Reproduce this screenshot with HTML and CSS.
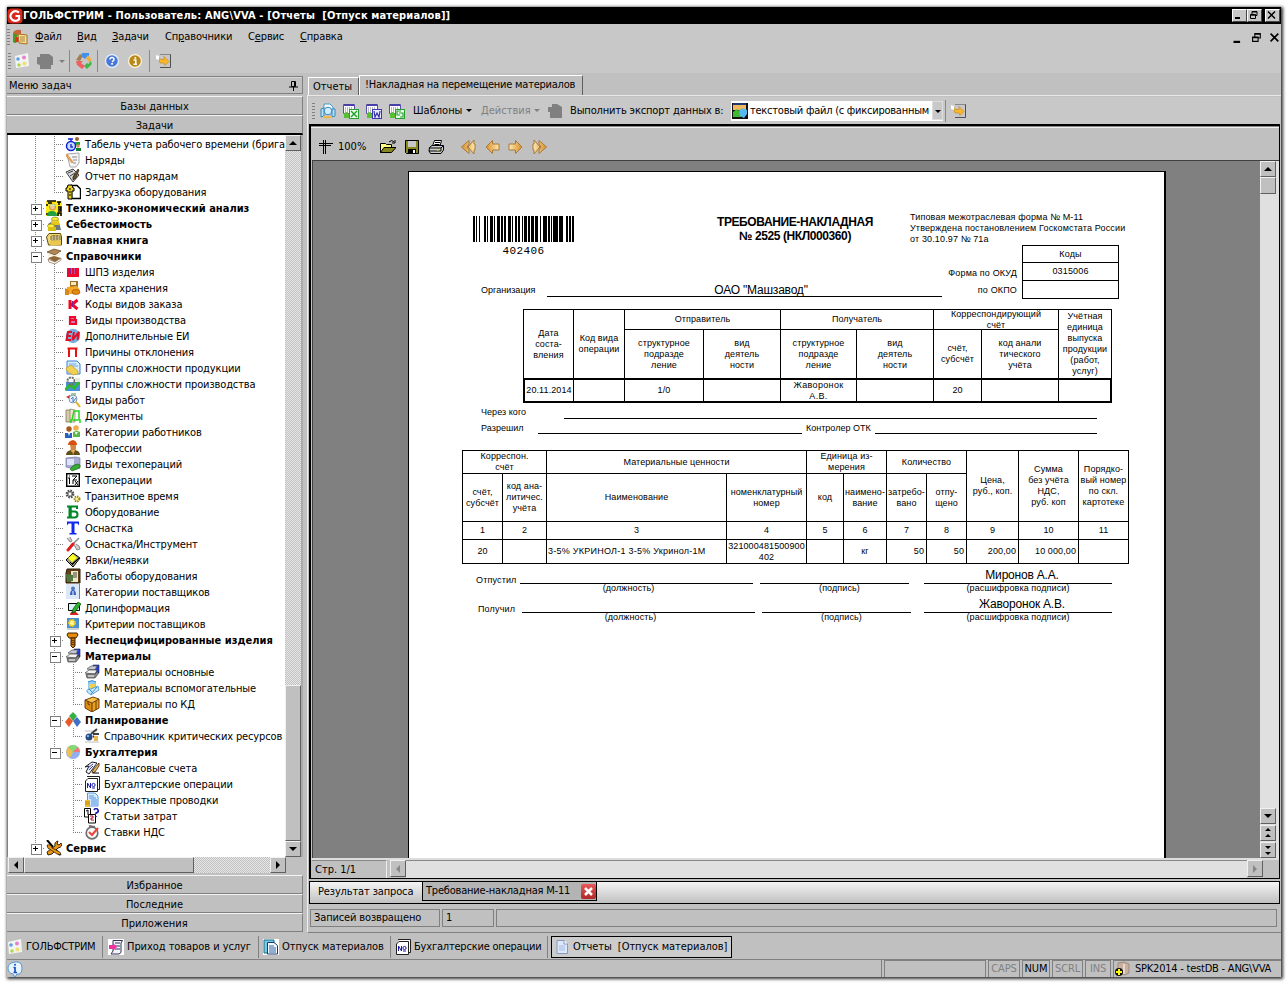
FILE: index.html
```html
<!DOCTYPE html>
<html lang="ru">
<head>
<meta charset="utf-8">
<title>ГОЛЬФСТРИМ</title>
<link rel="stylesheet" href="styles.css">
</head>
<body>
<svg class="defs" xmlns="http://www.w3.org/2000/svg">
<symbol id="logo" viewBox="0 0 16 16"><rect x=".5" y=".5" width="15" height="15" rx="4" fill="#d8281c"/><path d="M12 4.500Q8 1.500 4.800 5T5.500 12Q9 14 12 11.500V8H8.500" fill="none" stroke="#fff" stroke-width="2.200"/></symbol>
<symbol id="report" viewBox="0 0 16 16"><path d="M1 4Q3 0 9 1V7H1z" fill="#c86438"/><path d="M1 6q2-3 4 0v7q-2 2-4 0z" fill="#4a9a20"/><path d="M4 8h3v5H3z" fill="#e03020"/><path d="M6 5l9 1v9l-8-1z" fill="#f2e2a0" stroke="#a87020"/><path d="M8 8h5M8 10h5M8 12h5" stroke="#b08030"/></symbol>
<symbol id="dots" viewBox="0 0 16 16"><path d="M1 3L14 0 15 13 2 15z" fill="#f2f4f2"/><circle cx="4" cy="6" r="1.800" fill="#60a0e8"/><circle cx="10" cy="4.500" r="2" fill="#e880d0"/><circle cx="5" cy="12" r="1.800" fill="#b0d850"/><circle cx="10.500" cy="10.500" r="2" fill="#f0e070"/></symbol>
<symbol id="blob" viewBox="0 0 16 16"><path d="M3 1H12L16 4V12H14V16H3V12L0 11V4H3z" fill="#808080"/></symbol>
<symbol id="puzzle" viewBox="0 0 16 16"><path d="M1 4h4V1h5l5 3v11H3V9H1z" fill="#808080"/></symbol>
<symbol id="cycle" viewBox="0 0 16 16"><path d="M0 7L4 1 7 3 4 8z" fill="#a08050"/><path d="M6 0h7v6l-2-2-2 2-4-3z" fill="#4090f0"/><path d="M14 7l2 4-5 5-3-3 3-3 2 1z" fill="#40b848"/><path d="M0 8h7L5 10l4 3-3 3-5-4z" fill="#f06060"/><path d="M12 2l4 5-3 2-3-4z" fill="#f0b040"/></symbol>
<symbol id="help" viewBox="0 0 16 16"><circle cx="8" cy="8" r="7" fill="#e8f0ff"/><circle cx="8" cy="8" r="5.800" fill="#4878d8"/><path d="M6 6.500Q6 4.500 8 4.500T10 6.500Q10 7.500 8 8.800" fill="none" stroke="#fff" stroke-width="1.500"/><rect x="7.200" y="10" width="1.700" height="1.700" fill="#fff"/></symbol>
<symbol id="about" viewBox="0 0 16 16"><circle cx="8" cy="8" r="7" fill="#fff4d8"/><circle cx="8" cy="8" r="5.800" fill="#b88818"/><path d="M6.500 7H8.800V11M6.500 11.300H10" fill="none" stroke="#fff" stroke-width="1.500"/><rect x="7.500" y="4" width="1.700" height="1.700" fill="#fff"/></symbol>
<symbol id="exit" viewBox="0 0 16 16"><path d="M4 1.500H14.500V14.500H4" fill="none" stroke="#505050"/><path d="M4 1.500H14" stroke="#888"/><path d="M2 4l3 2.500h3V3.500L13 8.500 9 12.500 8 10H4z" fill="#f8b828" stroke="#c08020" stroke-width=".6"/><path d="M0 2l3 1v4L0 6z" fill="#fff"/></symbol>
<symbol id="preview" viewBox="0 0 16 16"><path d="M4 1h6l3 3v5H4z" fill="#f8fcff" stroke="#4898c8"/><path d="M1 6l3-1v8l-3 1zM12 6l3 0v7l-3 1z" fill="#b8e0f8" stroke="#3888b8"/><circle cx="8" cy="8" r="3.800" fill="#d0ecff" stroke="#3888b8"/><path d="M3 14q4 3 9 0v-1H3z" fill="#f0b848"/></symbol>
<symbol id="sheet" viewBox="0 0 16 16"><path d="M.5 1.500H11.500V10.500H.5z" fill="#fff" stroke="#5850a8"/><path d="M1 2h10" stroke="#4840a8" stroke-width="2"/><path d="M2 5h8M2 7h8M2 9h8" stroke="#707088" stroke-dasharray="1 1"/><path d="M1 12q0-3 3-3l2 2v4H1z" fill="#58c030"/></symbol>
<symbol id="xls" viewBox="0 0 16 16"><use href="#sheet"/><rect x="6.500" y="6.500" width="9" height="9" fill="#e8ffe8" stroke="#28a030"/><path d="M8 8l6 6M14 8l-6 6" stroke="#28a030" stroke-width="1.500"/></symbol>
<symbol id="doc" viewBox="0 0 16 16"><use href="#sheet"/><rect x="6.500" y="6.500" width="9" height="9" fill="#e8e8ff" stroke="#3838b0"/><path d="M8 8l1 6 2-4 2 4 1-6" fill="none" stroke="#3030a8" stroke-width="1.200"/></symbol>
<symbol id="csv" viewBox="0 0 16 16"><use href="#sheet"/><rect x="6.500" y="6.500" width="9" height="9" fill="#e8ffe8" stroke="#28a030"/><path d="M12 8H8v4h3M10 10h4v4h-3" fill="none" stroke="#28a030" stroke-width="1.200"/></symbol>
<symbol id="picture" viewBox="0 0 16 16"><path d="M0 0h16v16H0z" fill="#101010"/><path d="M1 1h13v6H1z" fill="#f0b860"/><path d="M1 0h13v2H1z" fill="#203878"/><path d="M1 9l4-3 4 4v4H1z" fill="#40b830"/><path d="M7 7q4-3 8 0v4l-3 4-4-2z" fill="#58b8f0"/></symbol>
<symbol id="cross" viewBox="0 0 16 16"><path d="M1 4.500H15M1 6.500H13M5.500 1V15M7.500 1V15" stroke="#000"/></symbol>
<symbol id="open" viewBox="0 0 16 16"><path d="M.5 13.500V4.500h5l1 1h5v3" fill="#ffff80" stroke="#000"/><path d="M.5 13.500L4 8.500H16L11.500 13.500z" fill="#888820" stroke="#000"/><path d="M9 3q3-3 5 0m1-2v3h-3" fill="none" stroke="#000"/></symbol>
<symbol id="save" viewBox="0 0 16 16"><path d="M1.500 1.500H14.500V14.500H2.500L1.500 13.500z" fill="#888820" stroke="#000"/><path d="M4 2h8v6H4z" fill="#c8c8c8"/><path d="M4 10h8v5H4z" fill="#000"/><path d="M9 11h2v3H9z" fill="#fff"/></symbol>
<symbol id="print" viewBox="0 0 16 16"><path d="M4.500 7L6.500 1.500H13.500L12 7" fill="#fff" stroke="#000"/><path d="M7 3.500h5M6.500 5.500h5" stroke="#000"/><path d="M1.500 8.500L4 6.500H15.500V11L13 14.500H2.500L1 12z" fill="#d0d0d0" stroke="#000"/><path d="M1 9h12v3H1M13 9l2-2" fill="none" stroke="#000"/><path d="M9 11h2" stroke="#dd0"/></symbol>
<linearGradient id="gold"><stop offset="0" stop-color="#ffe8b0"/><stop offset="1" stop-color="#d89028"/></linearGradient>
<symbol id="next" viewBox="0 0 16 16"><path d="M1 5H7.500V1.500L14 8 7.500 14.500V11H1z" fill="url(#gold)" stroke="#a87838"/></symbol>
<symbol id="prev" viewBox="0 0 16 16"><g transform="matrix(-1 0 0 1 16 0)"><use href="#next"/></g></symbol>
<symbol id="last" viewBox="0 0 16 16"><path d="M1 5H2V1L8 8 2 15V11H1zM7 1.500L14.500 8 7 14.500V11l2-3-2-3z" fill="url(#gold)" stroke="#a87838"/></symbol>
<symbol id="first" viewBox="0 0 16 16"><g transform="matrix(-1 0 0 1 16 0)"><use href="#last"/></g></symbol>
<symbol id="timer" viewBox="0 0 16 16"><circle cx="12" cy="3" r="2" fill="#a06030"/><path d="M10 6h5v3h-5z" fill="#20a040"/><circle cx="13" cy="10" r="1.800" fill="#d89050"/><path d="M11 12h5v3h-5z" fill="#108030"/><circle cx="6" cy="10" r="4.500" fill="#c8e0ff" stroke="#1020d0" stroke-width="1.500"/><path d="M6 3v3M3 3h5M6 8v3h2" fill="none" stroke="#1020d0" stroke-width="1.300"/></symbol>
<symbol id="note" viewBox="0 0 16 16"><path d="M2 2l12-1v10l-3 4H5z" fill="#f4f4f4" stroke="#a8a8a8"/><path d="M7 5h5M8 8h4M8 11h3" stroke="#888"/><path d="M2 2l6 8-1 1-6-7z" fill="#f0a848" stroke="#b87030" stroke-width=".5"/></symbol>
<symbol id="clip" viewBox="0 0 16 16"><path d="M1 4l7-3 6 6-6 7z" fill="#d8dce0" stroke="#404040"/><path d="M3 5l5-2M5 8l5-3M8 10l2-4" stroke="#404040"/><path d="M13 1L8 9v3l3-2 3-8z" fill="#705030" stroke="#201000" stroke-width=".6"/></symbol>
<symbol id="load" viewBox="0 0 16 16"><path d="M6.500 1.500H12L15.500 5V14.500H6.500z" fill="#fff" stroke="#000" stroke-width="1.400"/><path d="M3 1h4l1 3h1v3H7v8H3V7H1V4h1z" fill="#e8d020" stroke="#000"/><path d="M4 5h2M4 8h2M4 11h2" stroke="#000"/></symbol>
<symbol id="tea" viewBox="0 0 16 16"><path d="M0 1h16v15H0z" fill="#ffe818"/><path d="M1 1h9M2 3h4M0 5h2M11 2h4M13 2v3M12 7h3v4h-3M12 9h3M12 16v-3h3v3M0 14h3" fill="none" stroke="#000" stroke-width="1.500"/><circle cx="6.500" cy="7" r="3" fill="#f0c898" stroke="#805020" stroke-width=".5"/><path d="M3 6q3-4 7 0z" fill="#c0e8b0"/><path d="M1 16q0-5 5-5t5 5z" fill="#20a040"/></symbol>
<symbol id="cost" viewBox="0 0 16 16"><path d="M2 8l3-2h8l2 8H2z" fill="#707880"/><ellipse cx="9" cy="3" rx="3.500" ry="2" fill="#f8e838" stroke="#807000" stroke-width=".6"/><path d="M5 4v5h8V4q-4 3-8 0z" fill="#e8c818"/><ellipse cx="5" cy="10" rx="3.500" ry="2" fill="#fff040" stroke="#807000" stroke-width=".6"/><path d="M2 11v4h8v-4z" fill="#d8c010"/></symbol>
<symbol id="ledger" viewBox="0 0 16 16"><path d="M.5 5L3 1.500h11.500L15.500 5V13H2.500z" fill="#f0d878" stroke="#604808"/><path d="M5 4h9v4H5z" fill="#fff8d0" stroke="#604808" stroke-width=".7"/><path d="M8 3v5M11 3v5M5 6h9" stroke="#604808" stroke-width=".7"/><path d="M3 9l12-1v5l-10 1z" fill="#e8c850"/></symbol>
<symbol id="books" viewBox="0 0 16 16"><path d="M1 4l7-3 7 2-6 4z" fill="#b08858" stroke="#604018" stroke-width=".7"/><path d="M1 5l8 3 5-4v3L9 10 2 8z" fill="#f8f0d8"/><path d="M2 10l6-2 7 2-6 4z" fill="#906838"/><path d="M2 11l7 3 6-4v2l-6 4-6-2z" fill="#fff" stroke="#705028" stroke-width=".6"/></symbol>
<symbol id="sh" viewBox="0 0 16 16"><path d="M2 4H5V10H6.500V4H9.500V10H11V4H14V13H2z" fill="#f00828"/><path d="M5.700 4v6M10.200 4v6" stroke="#8020a0" stroke-width="1.500"/></symbol>
<symbol id="dozer" viewBox="0 0 16 16"><path d="M5 1h8v7H5z" fill="#a07028"/><path d="M6 2h5v3H6z" fill="#f8e8c0"/><path d="M2 7l10-1 3 4-4 4H2z" fill="#f8a828"/><path d="M0 8l4 2v5H0z" fill="#d88818"/><ellipse cx="11" cy="12" rx="4" ry="2.500" fill="#e88810" stroke="#804800" stroke-width=".6"/></symbol>
<symbol id="k" viewBox="0 0 16 16"><path d="M5 4v9M12.500 4L7 8.500l5.500 4.500" fill="none" stroke="#f00828" stroke-width="3"/><path d="M7.500 5v6" stroke="#802090"/></symbol>
<symbol id="b" viewBox="0 0 16 16"><path d="M5 5H10V8H5zM5 8H11V12H5z" fill="#d080c0" stroke="#f00828" stroke-width="2.200"/></symbol>
<symbol id="ei" viewBox="0 0 16 16"><circle cx="8" cy="8" r="7.200" fill="#78b0e0"/><path d="M7 4H3L1.500 12H6M2 8h4M9 4L7.500 12L14 4L12.500 12" fill="none" stroke="#e01028" stroke-width="2"/></symbol>
<symbol id="p" viewBox="0 0 16 16"><path d="M4 13V4.500H11V13M2.500 4.500h10" fill="none" stroke="#e81010" stroke-width="2"/></symbol>
<symbol id="gprod" viewBox="0 0 16 16"><path d="M2 1h10l3 3v10H2z" fill="#d8ecff" stroke="#3880d0"/><path d="M4 4h7M4 6h9" stroke="#70a8e0"/><path d="M1 8l5-3 7 6v3l-5 1-6-4z" fill="#f0d050" stroke="#b89020" stroke-width=".6"/></symbol>
<symbol id="gmake" viewBox="0 0 16 16"><path d="M1 6h14v9H1z" fill="#4890e0"/><path d="M0 14l5-5 4 3 5-6" fill="none" stroke="#30b830" stroke-width="3"/><circle cx="6" cy="5" r="3.500" fill="none" stroke="#707070" stroke-width="2" stroke-dasharray="2 .8"/><path d="M10 2h5v4h-5z" fill="#e0e8e0"/></symbol>
<symbol id="works" viewBox="0 0 16 16"><path d="M1 5l4-2v4z" fill="#c03020"/><path d="M6 2h5M6 4h4" stroke="#40a030"/><circle cx="8" cy="7" r="4" fill="#e8f0f8" stroke="#8898a8"/><path d="M6 7l2-2v5l3-4" stroke="#3880d0" fill="none"/><path d="M11 10l4 5" stroke="#e0b020" stroke-width="2"/></symbol>
<symbol id="docs" viewBox="0 0 16 16"><path d="M1 2h5v12H1z" fill="#d8cca8" stroke="#706850" stroke-width=".7"/><path d="M5 1l5 1v12l-5 0z" fill="#eee4c8" stroke="#706850" stroke-width=".6"/><path d="M6 15v-3h1L9 3h5v9h1v3M8 12h5" fill="none" stroke="#20d820" stroke-width="1.500"/></symbol>
<symbol id="people" viewBox="0 0 16 16"><circle cx="4" cy="5" r="2.700" fill="#a85818"/><circle cx="11" cy="4" r="2.800" fill="#f0b050"/><path d="M0 14V9h7v5z" fill="#2860c0"/><path d="M8 13V8q4-2 7 0v5z" fill="#58b848"/><path d="M3 9l1 3 1-3M10 8l1 3 2-3" fill="#fff"/></symbol>
<symbol id="worker" viewBox="0 0 16 16"><path d="M1 15q0-4 5-5h4q5 1 5 5z" fill="#605018"/><path d="M5 4h6v5l-2 3H6z" fill="#d08840"/><path d="M3 5q0-4 5-5 4 1 4 5z" fill="#d85010"/><path d="M7 10l1 5 2-5" fill="#e8b060"/></symbol>
<symbol id="ops" viewBox="0 0 16 16"><path d="M1 2l10-1 4 1v9l-5 2-9-2z" fill="#a8acd0" stroke="#606898" stroke-width=".6"/><path d="M2 3h7v6H2z" fill="#e0e4f8"/><path d="M5 13q3-5 8-5l2 1v3l-8 3z" fill="#38a838" stroke="#186018" stroke-width=".6"/></symbol>
<symbol id="techop" viewBox="0 0 16 16"><path d="M1.700 1.700H14.300V14.300H1.700z" fill="#fff" stroke="#000" stroke-width="1.400"/><path d="M3 6h2M4.500 6v6M4 4h1M7 4h5L8 8h4M8 8v4M10 9l3 4M13 9l-3 4" fill="none" stroke="#000"/></symbol>
<symbol id="gears" viewBox="0 0 16 16"><circle cx="5" cy="6" r="3.200" fill="#a0a0a0" stroke="#505050" stroke-width="2.400" stroke-dasharray="1.500 1"/><circle cx="12" cy="11" r="2.500" fill="#f8e888" stroke="#908020" stroke-width="2" stroke-dasharray="1.300 1"/><circle cx="5" cy="6" r="1.200" fill="#fff"/></symbol>
<symbol id="eq" viewBox="0 0 16 16"><path d="M12 5V2.500H2M5.500 2.500v11M6 7.500h3.500q3 0 3 3t-3 3H2" fill="none" stroke="#008828" stroke-width="2"/><path d="M5 2.500v11" stroke="#008828" stroke-width="3"/></symbol>
<symbol id="t" viewBox="0 0 16 16"><path d="M6.500 2h3v11h2v1.500h-7V13h2z" fill="#1028f0"/><path d="M2 1.500h12v4l-1.500-2H3.500L2 5.500z" fill="#1028f0"/></symbol>
<symbol id="tool" viewBox="0 0 16 16"><path d="M2 2l3 4 2-1-2-4M9 9l3 5 3-1-1-3-3-2" fill="#d0d0d0" stroke="#888"/><path d="M14 2L8 8" stroke="#888" stroke-width="1.500"/><path d="M8 8l-5 6" stroke="#e02020" stroke-width="3" stroke-linecap="round"/></symbol>
<symbol id="card" viewBox="0 0 16 16"><path d="M1 8L8 1 15 6 8 15z" fill="#a0a080" stroke="#000"/><path d="M3 6l5-4 4 4-5 4z" fill="#ffff20"/><path d="M1 8l6 6M5 10l2 2 7-6M7 13l7-7" fill="none" stroke="#000"/></symbol>
<symbol id="jobs" viewBox="0 0 16 16"><path d="M2 1h13v14H1V5z" fill="#604018" stroke="#302008"/><path d="M6 3h7v11H6z" fill="#f0e8c8"/><path d="M8 5h4M8 7h4M8 9h4" stroke="#404040"/><path d="M1 6l7 1v6l-6 1z" fill="#507840"/></symbol>
<symbol id="cat" viewBox="0 0 16 16"><path d="M1 0H14V15H1z" fill="#dce8f8"/><path d="M14.500 0v15" stroke="#7080a0"/><circle cx="8" cy="4.500" r="2" fill="#5078c0"/><path d="M5 11q0-5 3-5t3 5z" fill="#3860b8"/><path d="M8 7v4" stroke="#fff"/></symbol>
<symbol id="info" viewBox="0 0 16 16"><path d="M3.500 3.500h11v7h-11z" fill="#d8f0f8" stroke="#000"/><path d="M5 15q0-4 5-4l4 4z" fill="#e02020"/><path d="M13 2l3 2-6 8-3 1 1-4z" fill="#28b828" stroke="#084008" stroke-width=".7"/></symbol>
<symbol id="crit" viewBox="0 0 16 16"><path d="M2 2h12v10H2z" fill="#4890d0"/><circle cx="7" cy="7" r="3" fill="#fff8a0" stroke="#e8c820" stroke-width="2" stroke-dasharray="2 .8"/><path d="M2 13h12" stroke="#a0a0a0"/></symbol>
<symbol id="bolt" viewBox="0 0 16 16"><path d="M3 1h9l1 2-2 3H4L2 3z" fill="#e88c08" stroke="#402000"/><path d="M6 6h4v8l-2 2-2-2z" fill="#d87c08" stroke="#402000"/><path d="M6 8l4 1M6 10l4 1M6 12l4 1" stroke="#402000" stroke-width=".8"/></symbol>
<symbol id="mat" viewBox="0 0 16 16"><path d="M9 1l6 0v8l-4 1z" fill="#2840d8" stroke="#102060" stroke-width=".6"/><path d="M3 5l4-3h6l-2 4z" fill="#c8c8d0" stroke="#505050" stroke-width=".7"/><path d="M1 9l4-3h8l-2 4z" fill="#f4f4f4" stroke="#404040" stroke-width=".7"/><path d="M2 10h9l3-3v3l-3 4H3z" fill="#888" stroke="#404040" stroke-width=".7"/><path d="M4 12h6" stroke="#fff"/></symbol>
<symbol id="aux" viewBox="0 0 16 16"><path d="M4 1h8v10H4z" fill="#90c8f0"/><path d="M5 4h6v6H5z" fill="#f0d050"/><path d="M3 12q-1-3 4-3l7-3 1 4-8 5z" fill="#c8e8ff" stroke="#3890d0" stroke-width=".8"/><path d="M7 14l6-7M5 9l4 4" stroke="#3890d0"/><path d="M4 2q4-3 8 0" fill="none" stroke="#3890d0"/></symbol>
<symbol id="crate" viewBox="0 0 16 16"><path d="M1 4l8-3 6 2-7 4z" fill="#f8c048"/><path d="M1 4l7 3v9l-7-4z" fill="#d88c10"/><path d="M8 7l7-4v9l-7 4z" fill="#e8a020"/><path d="M1 4l7 3 7-4M8 7v9M4 5v3l2 1M12 5v9M1 4v8l7 4 7-4V3L9 1z" fill="none" stroke="#603000" stroke-width=".9"/></symbol>
<symbol id="cubes" viewBox="0 0 16 16"><path d="M8 0l4 4-4 5-4-5z" fill="#38b048"/><path d="M4 5l4 4-4 6-4-5z" fill="#e85828"/><path d="M12 5l4 5-4 5-4-6z" fill="#4070c8"/></symbol>
<symbol id="res" viewBox="0 0 16 16"><path d="M1 14H15M1 3h12" stroke="#c0c0c0"/><circle cx="5" cy="9" r="3.500" fill="#284880"/><path d="M7 6l6-5M9 6l6 0M9 8l4 3" stroke="#404040" stroke-width="2"/><path d="M10 8h4v5h-4z" fill="#e8b850"/><circle cx="4" cy="8" r="1.200" fill="#80b0f0"/></symbol>
<symbol id="pie" viewBox="0 0 16 16"><circle cx="8" cy="8" r="7" fill="#90b0f0"/><path d="M8 8L3 3Q8-1 13 3z" fill="#88d870"/><path d="M8 8L3 3Q-1 8 5 14z" fill="#f0c048"/><path d="M8 8l5-5q2 2 2 5z" fill="#f07878"/></symbol>
<symbol id="bal" viewBox="0 0 16 16"><path d="M1 7l7-5 5 1-8 11-3-2 3-6z" fill="#f0f0ff" stroke="#202020"/><path d="M4 8l5-4M5 10l4-4" stroke="#4048a0"/><path d="M15 3L9 10l-1 3 3-1 4-6z" fill="#e0b858" stroke="#402000" stroke-width=".8"/><path d="M9 13h6" stroke="#000"/></symbol>
<symbol id="num" viewBox="0 0 16 16"><path d="M3 .500H15.500V13.500H13.500" fill="#fff" stroke="#202020"/><path d="M4 2.500L1.500 5V15.500H13.500V2.500z" fill="#fff" stroke="#202020"/><path d="M3.500 12V7l3 5V7" fill="none" stroke="#1818a0"/><circle cx="9.500" cy="9" r="1.600" fill="none" stroke="#1818a0"/><path d="M8 12h3" stroke="#1818a0"/></symbol>
<symbol id="corr" viewBox="0 0 16 16"><path d="M3.500 1H11l3 3v10H3.500z" fill="#d8ecff" stroke="#5898e0"/><path d="M5 4h5M5 6h7M7 8h6M7 10h6M7 12h6" stroke="#5090e0"/><path d="M1 8h5v7H1z" fill="#f0c030"/><path d="M1 10h5M1 12h5" stroke="#a07000" stroke-width=".7"/></symbol>
<symbol id="items" viewBox="0 0 16 16"><path d="M.500.500H6.500V9H.5z" fill="#fff" stroke="#000"/><path d="M2 3l2-1v5" fill="none" stroke="#000"/><path d="M4.500 6.500H11.500V15H4.500z" fill="#fff" stroke="#000"/><path d="M6 8h3v2H7v2h3" fill="none" stroke="#b01018"/><path d="M10 2q2-3 4 0 1 2-2 3v1M12 8v1" fill="none" stroke="#1818b0" stroke-width="1.600"/></symbol>
<symbol id="rate" viewBox="0 0 16 16"><circle cx="8" cy="9" r="5.800" fill="#f8f8f8" stroke="#707070" stroke-width="1.700"/><path d="M5 2l6 1" stroke="#707070" stroke-width="2"/><path d="M5 8l3 3 6-7" fill="none" stroke="#f04038" stroke-width="2"/></symbol>
<symbol id="service" viewBox="0 0 16 16"><path d="M1 0l6 7M9 9l5 6" stroke="#000" stroke-width="2"/><path d="M12 1l-1 3 2 1 2-2q2 4-3 5L6 14l-4 1-1-3 8-6q-1-4 3-5z" fill="#e89818" stroke="#201000" stroke-width=".9"/><path d="M1 5q4-1 5 3l6 3q3 1 3 4l-4-1-6-4Q1 9 1 5z" fill="#e89818" stroke="#201000" stroke-width=".7"/></symbol>
<symbol id="income" viewBox="0 0 16 16"><path d="M0 0h16v16H0z" fill="#fff"/><path d="M5 1.500H14.500L13 4V13.500L11 15H3l2-3z" fill="#f4f4ff" stroke="#303050"/><path d="M7 4h5M7 7h5M7 10h5" stroke="#303050"/><path d="M1 6h4V4l4 4-4 4V10H1z" fill="#f030a0"/></symbol>
<symbol id="outgo" viewBox="0 0 16 16"><path d="M0 0h16v16H0z" fill="#fff"/><path d="M1 1h10v13H1z" fill="#78c8e8" stroke="#107090"/><path d="M4.500 3.500H11l3.500 3V15H4.500z" fill="#f4fcff" stroke="#203868"/><path d="M6 7h5M6 9h7M6 11h7M6 13h7" stroke="#3060a0"/></symbol>
<symbol id="paper" viewBox="0 0 16 16"><path d="M3 1.500h7L13.500 5V14.500H3z" fill="#dce8fc" stroke="#8898c0"/><path d="M10 1v4h4" fill="#fff" stroke="#8898c0"/><path d="M5 7h6M5 9h6M5 11h6" stroke="#a8bce0"/></symbol>
<symbol id="bubble" viewBox="0 0 16 16"><path d="M8 16l-2-3Q1 12 1 7T8 1t7 6-5 6z" fill="#e8f4ff" stroke="#5898d0"/><path d="M8 6v5M6.500 6.500H8M6.500 11.500h3.500" stroke="#1850c0" stroke-width="1.700"/><circle cx="8" cy="3.700" r="1" fill="#1850c0"/></symbol>
<symbol id="db" viewBox="0 0 16 16"><path d="M4 2l6-1 5 2v9l-4 2-7-2z" fill="#c8b0a0" stroke="#907868" stroke-width=".7"/><path d="M10 3v10" stroke="#e8d8d0" stroke-width="2"/><circle cx="5" cy="11" r="4" fill="#101010"/><path d="M5 8v6M2 11h6" stroke="#ffff10" stroke-width="2"/></symbol>
</svg>

<div class="window">
  <header class="title"><svg class="ic"><use href="#logo"/></svg><b>ГОЛЬФСТРИМ - Пользователь: ANG\VVA - [Отчеты&nbsp; [Отпуск материалов]]</b>
    <span class="winbtns"><i><svg viewBox="0 0 12 10"><path d="M2 8h5" stroke="#000" stroke-width="2"/></svg></i><i><svg viewBox="0 0 12 10"><path d="M4 4V1.500h5v4H7M2.500 4.500h5v4h-5zM2.500 5.200h5M4 2h5" fill="none" stroke="#000"/></svg></i><i class="x"><svg viewBox="0 0 12 10"><path d="M2 1.500l7 7M9 1.500l-7 7" stroke="#000" stroke-width="1.500"/></svg></i></span>
  </header>
  <nav class="menu"><span class="grip"></span><svg class="ic"><use href="#report"/></svg>
    <span class="m1"><u>Ф</u>айл</span><span class="m2"><u>В</u>ид</span><span class="m3"><u>З</u>адачи</span><span class="m4">Сп<u>р</u>авочники</span><span class="m5">С<u>е</u>рвис</span><span class="m6"><u>С</u>правка</span>
    <span class="mdi"><svg viewBox="0 0 12 10"><path d="M1 9h6" stroke="#000" stroke-width="2"/></svg><svg viewBox="0 0 12 10"><path d="M4 4V1.500h5v4H7M2 4.500h5v4H2zM2 5.200h5M4 2h5" fill="none" stroke="#000"/></svg><svg viewBox="0 0 12 10"><path d="M2 1.500l7 7M9 1.500l-7 7" stroke="#000" stroke-width="1.500"/></svg></span>
  </nav>
  <div class="tools"><span class="grip"></span><svg class="ic"><use href="#dots"/></svg><svg class="ic i2"><use href="#blob"/></svg><span class="caret off"></span><span class="sep p1"></span><svg class="ic i3"><use href="#cycle"/></svg><span class="sep p2"></span><svg class="ic i4"><use href="#help"/></svg><svg class="ic i5"><use href="#about"/></svg><span class="sep p3"></span><svg class="ic i6"><use href="#exit"/></svg></div>

  <div class="body">
    <aside class="side">
      <div class="sidehead"><span>Меню задач</span><svg width="9" height="12" viewBox="0 0 9 12"><path d="M2.500 1.500h4v5h-4zM5.500 2v5M0 7h9M4.500 7v4" fill="none" stroke="#000"/></svg></div>
      <div class="group">Базы данных</div>
      <div class="group dark">Задачи</div>
      <div class="treebox">
        <ul class="tree">
<li><i class="v"></i><i class="t"></i><svg><use href="#timer"/></svg><span>Табель учета рабочего времени (брига</span></li>
<li><i class="v"></i><i class="t"></i><svg><use href="#note"/></svg><span>Наряды</span></li>
<li><i class="v"></i><i class="t"></i><svg><use href="#clip"/></svg><span>Отчет по нарядам</span></li>
<li><i class="v"></i><i class="l"></i><svg><use href="#load"/></svg><span>Загрузка оборудования</span></li>
<li><i class="t ex plus"></i><svg><use href="#tea"/></svg><b>Технико-экономический анализ</b></li>
<li><i class="t ex plus"></i><svg><use href="#cost"/></svg><b>Себестоимость</b></li>
<li><i class="t ex plus"></i><svg><use href="#ledger"/></svg><b>Главная книга</b></li>
<li><i class="t ex"></i><svg><use href="#books"/></svg><b>Справочники</b></li>
<li><i class="v"></i><i class="t"></i><svg><use href="#sh"/></svg><span>ШПЗ изделия</span></li>
<li><i class="v"></i><i class="t"></i><svg><use href="#dozer"/></svg><span>Места хранения</span></li>
<li><i class="v"></i><i class="t"></i><svg><use href="#k"/></svg><span>Коды видов заказа</span></li>
<li><i class="v"></i><i class="t"></i><svg><use href="#b"/></svg><span>Виды производства</span></li>
<li><i class="v"></i><i class="t"></i><svg><use href="#ei"/></svg><span>Дополнительные ЕИ</span></li>
<li><i class="v"></i><i class="t"></i><svg><use href="#p"/></svg><span>Причины отклонения</span></li>
<li><i class="v"></i><i class="t"></i><svg><use href="#gprod"/></svg><span>Группы сложности продукции</span></li>
<li><i class="v"></i><i class="t"></i><svg><use href="#gmake"/></svg><span>Группы сложности производства</span></li>
<li><i class="v"></i><i class="t"></i><svg><use href="#works"/></svg><span>Виды работ</span></li>
<li><i class="v"></i><i class="t"></i><svg><use href="#docs"/></svg><span>Документы</span></li>
<li><i class="v"></i><i class="t"></i><svg><use href="#people"/></svg><span>Категории работников</span></li>
<li><i class="v"></i><i class="t"></i><svg><use href="#worker"/></svg><span>Профессии</span></li>
<li><i class="v"></i><i class="t"></i><svg><use href="#ops"/></svg><span>Виды техопераций</span></li>
<li><i class="v"></i><i class="t"></i><svg><use href="#techop"/></svg><span>Техоперации</span></li>
<li><i class="v"></i><i class="t"></i><svg><use href="#gears"/></svg><span>Транзитное время</span></li>
<li><i class="v"></i><i class="t"></i><svg><use href="#eq"/></svg><span>Оборудование</span></li>
<li><i class="v"></i><i class="t"></i><svg><use href="#t"/></svg><span>Оснастка</span></li>
<li><i class="v"></i><i class="t"></i><svg><use href="#tool"/></svg><span>Оснастка/Инструмент</span></li>
<li><i class="v"></i><i class="t"></i><svg><use href="#card"/></svg><span>Явки/неявки</span></li>
<li><i class="v"></i><i class="t"></i><svg><use href="#jobs"/></svg><span>Работы оборудования</span></li>
<li><i class="v"></i><i class="t"></i><svg><use href="#cat"/></svg><span>Категории поставщиков</span></li>
<li><i class="v"></i><i class="t"></i><svg><use href="#info"/></svg><span>Допинформация</span></li>
<li><i class="v"></i><i class="t"></i><svg><use href="#crit"/></svg><span>Критерии поставщиков</span></li>
<li><i class="v"></i><i class="t ex plus"></i><svg><use href="#bolt"/></svg><b>Неспецифицированные изделия</b></li>
<li><i class="v"></i><i class="t ex"></i><svg><use href="#mat"/></svg><b>Материалы</b></li>
<li><i class="v"></i><i class="v"></i><i class="t"></i><svg><use href="#mat"/></svg><span>Материалы основные</span></li>
<li><i class="v"></i><i class="v"></i><i class="t"></i><svg><use href="#aux"/></svg><span>Материалы вспомогательные</span></li>
<li><i class="v"></i><i class="v"></i><i class="l"></i><svg><use href="#crate"/></svg><span>Материалы по КД</span></li>
<li><i class="v"></i><i class="t ex"></i><svg><use href="#cubes"/></svg><b>Планирование</b></li>
<li><i class="v"></i><i class="v"></i><i class="l"></i><svg><use href="#res"/></svg><span>Справочник критических ресурсов</span></li>
<li><i class="v"></i><i class="l ex"></i><svg><use href="#pie"/></svg><b>Бухгалтерия</b></li>
<li><i class="v"></i><i></i><i class="t"></i><svg><use href="#bal"/></svg><span>Балансовые счета</span></li>
<li><i class="v"></i><i></i><i class="t"></i><svg><use href="#num"/></svg><span>Бухгалтерские операции</span></li>
<li><i class="v"></i><i></i><i class="t"></i><svg><use href="#corr"/></svg><span>Корректные проводки</span></li>
<li><i class="v"></i><i></i><i class="t"></i><svg><use href="#items"/></svg><span>Статьи затрат</span></li>
<li><i class="v"></i><i></i><i class="l"></i><svg><use href="#rate"/></svg><span>Ставки НДС</span></li>
<li><i class="l ex plus"></i><svg><use href="#service"/></svg><b>Сервис</b></li>
        </ul>
        <div class="vscroll"><span class="sb up"></span><span class="thumb"></span><span class="sb down"></span></div>
      </div>
      <div class="hscroll"><span class="sb left"></span><span class="thumb"></span><span class="sb right"></span></div>
      <div class="group">Избранное</div>
      <div class="group">Последние</div>
      <div class="group">Приложения</div>
    </aside>

    <main class="work">
      <div class="tabs"><span class="tab t1">Отчеты</span><span class="tab t2">!Накладная на перемещение материалов</span></div>
      <div class="panel">
        <div class="export"><span class="grip"></span><svg class="ic"><use href="#preview"/></svg><svg class="ic e2"><use href="#xls"/></svg><svg class="ic e2"><use href="#doc"/></svg><svg class="ic e2"><use href="#csv"/></svg><span class="x1">Шаблоны</span><span class="caret"></span><span class="x2">Действия</span><span class="caret off"></span><svg class="ic e3"><use href="#puzzle"/></svg><span class="x3">Выполнить экспорт данных в:</span><span class="combo"><svg class="ic"><use href="#picture"/></svg><span>текстовый файл (с фиксированным</span><i class="caret"></i></span><span class="sep"></span><svg class="ic e4"><use href="#exit"/></svg></div>
        <div class="viewer">
          <div class="vtools"><svg class="ic"><use href="#cross"/></svg><span class="zoom">100%</span><svg class="ic v1"><use href="#open"/></svg><svg class="ic v2"><use href="#save"/></svg><svg class="ic v2"><use href="#print"/></svg><svg class="ic v3"><use href="#first"/></svg><svg class="ic v2"><use href="#prev"/></svg><svg class="ic v2"><use href="#next"/></svg><svg class="ic v2"><use href="#last"/></svg></div>
          <div class="canvas">
            <div class="sheet">
              <section class="top">
                <div class="bar"><svg width="101" height="26" viewBox="0 0 101 26" shape-rendering="crispEdges"><path d="M0 0h2v26H0zM3 0h1v26H3zM6 0h1v26H6zM11 0h2v26h-2zM14 0h1v26h-1zM17 0h3v26h-3zM21 0h1v26h-1zM24 0h3v26h-3zM28 0h2v26h-2zM31 0h2v26h-2zM35 0h3v26h-3zM39 0h1v26h-1zM42 0h2v26h-2zM45 0h2v26h-2zM49 0h1v26h-1zM51 0h3v26h-3zM55 0h2v26h-2zM58 0h3v26h-3zM62 0h3v26h-3zM67 0h1v26h-1zM70 0h4v26h-4zM75 0h2v26h-2zM78 0h1v26h-1zM80 0h5v26h-5zM86 0h4v26h-4zM93 0h2v26h-2zM96 0h2v26h-2zM99 0h2v26h-2z"/></svg><code>402406</code></div>
                <h1>ТРЕБОВАНИЕ-НАКЛАДНАЯ<br>№ 2525 (НКЛ000360)</h1>
                <p>Типовая межотраслевая форма № М-11<br>Утверждена постановлением Госкомстата России<br>от 30.10.97 № 71а</p>
              </section>
              <section class="org">
                <span class="orgl">Организация</span><span class="orgv">ОАО "Машзавод"</span>
                <div class="okl"><span>Форма по ОКУД</span><span>по ОКПО</span></div>
                <div class="codes"><span>Коды</span><span>0315006</span><span></span></div>
              </section>
              <div class="g g1">
                <div class="r2">Дата<br>соста-<br>вления</div><div class="r2">Код вида<br>операции</div><div class="c2">Отправитель</div><div class="c2">Получатель</div><div class="c2 tight">Корреспондирующий<br>счёт</div><div class="r2">Учётная<br>единица<br>выпуска<br>продукции<br>(работ,<br>услуг)</div>
                <div>структурное<br>подразде<br>ление</div><div>вид<br>деятель<br>ности</div><div>структурное<br>подразде<br>ление</div><div>вид<br>деятель<br>ности</div><div>счёт,<br>субсчёт</div><div>код анали<br>тического<br>учёта</div>
              </div>
              <div class="g g1b"><div class="date">20.11.2014</div><div></div><div>1/0</div><div></div><div class="wide">Жаворонок<br>А.В.</div><div></div><div>20</div><div></div><div></div></div>
              <div class="ln l1"><span>Через кого</span><i></i></div>
              <div class="ln l2"><span>Разрешил</span><i></i><span class="otk">Контролер ОТК</span><i class="z"></i></div>
              <div class="g g2">
                <div class="c2">Корреспон.<br>счёт</div><div class="c2">Материальные ценности</div><div class="c2">Единица из-<br>мерения</div><div class="c2">Количество</div><div class="r2">Цена,<br>руб., коп.</div><div class="r2">Сумма<br>без учёта<br>НДС,<br>руб. коп</div><div class="r2">Порядко-<br>вый номер<br>по скл.<br>картотеке</div>
                <div>счёт,<br>субсчёт</div><div>код ана-<br>литичес.<br>учёта</div><div>Наименование</div><div>номенклатурный<br>номер</div><div>код</div><div>наимено-<br>вание</div><div>затребо-<br>вано</div><div>отпу-<br>щено</div>
                <div>1</div><div>2</div><div>3</div><div>4</div><div>5</div><div>6</div><div>7</div><div>8</div><div>9</div><div>10</div><div>11</div>
                <div>20</div><div></div><div class="lt">3-5% УКРИНОЛ-1 3-5% Укринол-1М</div><div>321000481500900<br>402</div><div></div><div>кг</div><div class="rt">50</div><div class="rt">50</div><div class="rt">200,00</div><div class="rt">10 000,00</div><div></div>
              </div>
              <div class="sign"><span class="who">Отпустил</span><div class="f1"><em></em><small>(должность)</small></div><div class="f2"><em></em><small>(подпись)</small></div><div class="f3"><em>Миронов А.А.</em><small>(расшифровка подписи)</small></div></div>
              <div class="sign recv"><span class="who">Получил</span><div class="f1"><em></em><small>(должность)</small></div><div class="f2"><em></em><small>(подпись)</small></div><div class="f3"><em>Жаворонок А.В.</em><small>(расшифровка подписи)</small></div></div>
            </div>
            <div class="vs2"><span class="sb up"></span><span class="thumb"></span><span class="sb down"></span><span class="sb dbl"><svg width="8" height="10" viewBox="0 0 8 10"><path d="M4 0l3 3H1zM4 6l3 3H1z"/></svg></span><span class="sb dbl"><svg width="8" height="10" viewBox="0 0 8 10"><path d="M1 1h6L4 4zM1 7h6l-3 3z"/></svg></span></div>
          </div>
          <div class="pager"><span class="pg">Стр. 1/1</span><span class="sb left off"></span><span class="track"></span><span class="sb right off"></span><span class="corner"></span></div>
        </div>
        <div class="btabs"><span class="bt1">Результат запроса</span><span class="bt2">Требование-накладная М-11 <i><svg width="15" height="15" viewBox="0 0 15 15"><path d="M4 4l7 7M11 4l-7 7" stroke="#fff" stroke-width="2.500"/></svg></i></span></div>
        <div class="stat"><span class="a">Записей возвращено</span><span class="b">1</span><span class="c"></span></div>
      </div>
    </main>
  </div>

  <div class="tasks"><span class="k1"><svg class="ic"><use href="#dots"/></svg>ГОЛЬФСТРИМ</span><span class="k2"><svg class="ic"><use href="#income"/></svg>Приход товаров и услуг</span><span class="k3"><svg class="ic"><use href="#outgo"/></svg>Отпуск материалов</span><span class="k4"><svg class="ic"><use href="#num"/></svg>Бухгалтерские операции</span><span class="k5"><svg class="ic"><use href="#paper"/></svg>Отчеты&nbsp; [Отпуск материалов]</span></div>
  <footer class="status"><span class="q0"><svg class="ic"><use href="#bubble"/></svg></span><span class="q1"></span><span class="q2">CAPS</span><span class="q3">NUM</span><span class="q4">SCRL</span><span class="q5">INS</span><span class="q6"><svg class="ic"><use href="#db"/></svg>SPK2014 - testDB - ANG\VVA</span></footer>
</div>
</body>
</html>
```
FILE: styles.css
```css
* { box-sizing: border-box; }
body { margin: 0; padding: 7px; width: 1288px; height: 984px; overflow: hidden; background: #fff; font: 11px/14px "DejaVu Sans Condensed", "DejaVu Sans", sans-serif; font-stretch: condensed; letter-spacing: -.14px; color: #000; white-space: nowrap; }
i, em { font-style: normal; }
b { letter-spacing: .02px; }
.defs { position: absolute; width: 0; height: 0; }
.window { width: 1274px; height: 970px; background: #c0c0c0; box-shadow: 1px 1px 3px 1px #333; display: flex; flex-direction: column; }
.ic { width: 16px; height: 16px; flex: none; }
u { text-underline-offset: 1px; }

.title { height: 17px; background: #000; color: #fff; display: flex; align-items: center; }
.title b { letter-spacing: .14px; }
.winbtns { margin-left: auto; display: flex; margin-right: 1px; }
.winbtns i { width: 15px; height: 13px; background: #c8c8c8; border: 1px solid #fff; border-right-color: #444; border-bottom-color: #444; }
.winbtns svg { display: block; width: 12px; height: 10px; }
.winbtns .x { margin-left: 3px; }

.menu { height: 25px; background: #c8c8c8; display: flex; align-items: center; }
.grip { width: 3px; height: 16px; margin: 0 2px 0 0; background: repeating-linear-gradient(#808080 0 1px, transparent 1px 3px); flex: none; }
.menu > span:not(.grip) { padding-top: 1px; flex: none; }
.menu .m1 { margin-left: 7px; width: 42px; }
.menu .m2 { width: 35px; }
.menu .m3 { width: 53px; }
.menu .m4 { width: 83px; }
.menu .m5 { width: 52px; }
.menu .m6 { width: 60px; }
.menu .mdi { margin-left: auto; display: flex; gap: 4px; margin-right: -1px; }
.mdi svg { width: 14px; height: 11px; }

.tools { height: 24px; background: #c8c8c8; display: flex; align-items: center; padding-left: 1px; }
.tools .grip { margin-right: 3px; }
.i2 { margin-left: 7px; }
.caret { width: 0; height: 0; border: 3px solid transparent; border-top-color: #000; border-bottom: 0; flex: none; }
.caret.off { border-top-color: #808080; }
.tools .caret { margin-left: 6px; }
.sep { width: 1px; height: 22px; background: #888; flex: none; }
.p1 { margin-left: 4px; } .i3 { margin-left: 6px; } .p2 { margin-left: 5px; } .i4 { margin-left: 6px; } .i5 { margin-left: 7px; } .p3 { margin-left: 6px; } .i6 { margin-left: 6px; }

.body { height: 860px; display: flex; }
.side { width: 296px; padding-top: 3px; flex: none; }
.sidehead { height: 18px; border: 1px solid #808080; border-left: 0; box-shadow: inset 0 1px #d8d8d8; display: flex; justify-content: space-between; align-items: center; padding: 1px 4px 0 2px; margin-bottom: 2px; letter-spacing: 0; }
.group { height: 19px; border-top: 1px solid #f4f4f4; border-bottom: 1px solid #808080; border-right: 1px solid #808080; text-align: center; line-height: 20px; letter-spacing: 0; }
.group.dark { border-bottom: 2px solid #000; line-height: 19px; height: 20px; }
.treebox { height: 722px; display: flex; background: #fff; border-left: 1px solid #808080; border-right: 2px solid #aaa; }
.tree { list-style: none; margin: 0; padding: 1px 0 0 18px; width: 277px; overflow: hidden; flex: none; }
.tree li { height: 16px; display: flex; align-items: center; }
.tree svg { width: 16px; height: 16px; margin-left: 1px; flex: none; }
.tree span, .tree b { margin-left: 4px; line-height: 14px; padding-top: 1px; }
.tree i { position: relative; width: 19px; height: 16px; flex: none; }
.tree .v, .tree .t { background: repeating-linear-gradient(#808080 0 1px, transparent 1px 2px) 9px 0 / 1px 16px no-repeat; }
.tree .t { background: repeating-linear-gradient(#808080 0 1px, transparent 1px 2px) 9px 0 / 1px 16px no-repeat, repeating-linear-gradient(90deg, #808080 0 1px, transparent 1px 2px) 9px 8px / 10px 1px no-repeat; }
.tree .l { background: repeating-linear-gradient(#808080 0 1px, transparent 1px 2px) 9px 0 / 1px 9px no-repeat, repeating-linear-gradient(90deg, #808080 0 1px, transparent 1px 2px) 9px 8px / 10px 1px no-repeat; }
.ex::before { content: ""; position: absolute; left: 5px; top: 4px; width: 9px; height: 9px; border: 1px solid #808080; background: linear-gradient(#000, #000) 1px 3px / 5px 1px no-repeat #fff; }
.ex.plus::before { background: linear-gradient(#000, #000) 1px 3px / 5px 1px no-repeat, linear-gradient(#000, #000) 3px 1px / 1px 5px no-repeat #fff; }
.sb { width: 16px; height: 16px; background: #c0c0c0; border: 1px solid #f0f0f0; border-right-color: #606060; border-bottom-color: #606060; display: flex; align-items: center; justify-content: center; flex: none; }
.sb::after { content: ""; border: 4px solid transparent; }
.up::after { border-top: 0; border-bottom-color: #000; }
.down::after { border-bottom: 0; border-top-color: #000; }
.left::after { border-left: 0; border-right-color: #000; }
.right::after { border-right: 0; border-left-color: #000; }
.left.off::after { border-right-color: #888; }
.right.off::after { border-left-color: #888; }
.vscroll { width: 16px; display: flex; flex-direction: column; background: repeating-conic-gradient(#c0c0c0 0 25%, #e8e8e8 0 50%) 0 0 / 2px 2px; }
.thumb { background: #c0c0c0; border: 1px solid #f0f0f0; border-right-color: #606060; border-bottom-color: #606060; }
.vscroll .thumb { margin-top: 534px; flex: 1; }
.hscroll { height: 16px; width: 278px; margin: 0 0 2px 1px; display: flex; background: repeating-conic-gradient(#c0c0c0 0 25%, #e8e8e8 0 50%) 0 0 / 2px 2px; }
.hscroll .thumb { width: 170px; }
.hscroll .right { margin-left: auto; }

.work { margin-left: 4px; width: 974px; padding-top: 2px; }
.tabs { height: 20px; display: flex; align-items: flex-end; }
.tab { border: 1px solid #fff; border-right-color: #606060; border-bottom: 0; }
.t1 { width: 51px; height: 18px; padding: 2px 0 0 4px; margin-left: 1px; letter-spacing: 0; }
.t2 { width: 224px; height: 20px; padding: 2px 0 0 5px; letter-spacing: -.23px; }
.panel { border-left: 1px solid #eee; border-top: 1px solid #e8e8e8; border-bottom: 1px solid #808080; height: 838px; padding: 1px 0 0 1px; }
.export { height: 27px; background: #c8c8c8; display: flex; align-items: center; padding-left: 3px; margin-right: 1px; }
.export .grip { margin-right: 5px; }
.e2 { margin-left: 7px; }
.export .x1 { margin-left: 8px; width: 53px; letter-spacing: 0; }
.export .x2 { margin-left: 9px; width: 53px; color: #808080; letter-spacing: 0; }
.e3 { margin-left: 7px; }
.export .x3 { margin-left: 7px; width: 155px; letter-spacing: -.15px; }
.combo { margin-left: 6px; width: 212px; height: 20px; background: #fff; display: flex; align-items: center; overflow: hidden; padding-left: 1px; }
.combo span { margin-left: 2px; width: 182px; letter-spacing: -.24px; }
.combo .caret { width: 11px; height: 19px; border: 1px solid #ddd; background: #c8c8c8; position: relative; }
.combo .caret::after { content: ""; position: absolute; left: 2px; top: 8px; border: 3px solid transparent; border-top-color: #000; border-bottom: 0; }
.export .sep { margin-left: 2px; }
.e4 { margin-left: 5px; }

.viewer { width: 971px; height: 755px; border: 2px solid #000; border-right-width: 1px; border-bottom-width: 1px; box-shadow: inset 0 1px #888, inset 0 2px #eee; padding-top: 2px; padding-left: 1px; }
.vtools { height: 32px; display: flex; align-items: center; padding: 5px 0 0 6px; }
.zoom { margin-left: 4px; width: 30px; padding-top: 1px; letter-spacing: 0; }
.v1 { margin-left: 12px; } .v2 { margin-left: 8px; } .v3 { margin-left: 16px; }
.canvas { height: 698px; background: #808080; border: 1px solid #404040; border-right: 0; border-bottom: 0; display: flex; justify-content: space-between; overflow: hidden; }
.sheet { margin: 10px 0 0 95px; width: 758px; height: 700px; background: #fff; border: 1px solid #000; border-right-width: 2px; border-bottom: 0; font: 9px/11px "Liberation Sans", Arial, sans-serif; letter-spacing: .15px; flex: none; }
.vs2 { width: 19px; background: #e0e0e0; padding: 0 3px 0 0; display: flex; flex-direction: column; }
.vs2 .sb, .vs2 .thumb { width: 16px; }
.vs2 .thumb { height: 17px; }
.vs2 .down { margin-top: auto; }
.vs2 .dbl { margin-top: 1px; }
.dbl::after { display: none; }
.pager { height: 20px; display: flex; border-top: 2px solid #ddd; margin-left: -1px; }
.pg { width: 75px; margin-left: 1px; border-right: 1px solid #eee; border-top: 1px solid #888; padding: 2px 0 0 3px; letter-spacing: 0; }
.pager .sb { margin-left: 3px; height: 17px; }
.track { flex: 1; background: #e0e0e0; border-top: 1px solid #888; }
.pager .sb.right { margin-left: 0; }
.corner { width: 16px; }

.top { display: flex; height: 73px; padding: 44px 0 0 64px; }
.bar { width: 101px; text-align: center; }
.bar svg { display: block; }
.bar code { display: block; font: 11px/13px "Liberation Mono", monospace; letter-spacing: .4px; margin-top: 3px; }
.top h1 { margin: -1px 0 0 122px; width: 198px; font: bold 12px/14px "Liberation Sans", sans-serif; text-align: center; letter-spacing: -.4px; }
.top p { margin: -4px 0 0 16px; }
.org { display: flex; height: 64px; padding: 0 0 0 72px; }
.orgl { width: 66px; margin-top: 40px; letter-spacing: .02px; }
.orgv { width: 395px; height: 52px; border-bottom: 1px solid #000; text-align: center; padding: 38px 0 0 33px; font-size: 12px; line-height: 15px; letter-spacing: -.2px; }
.okl { width: 75px; text-align: right; display: flex; flex-direction: column; gap: 6px; padding-top: 23px; }
.codes { margin-left: 5px; width: 97px; height: 54px; border: 1px solid #000; display: grid; grid-template-rows: 16px 17px 17px; gap: 1px; background: #000; }
.codes span { background: #fff; text-align: center; line-height: 17px; }
.g { display: grid; gap: 1px; background: #000; padding: 1px; text-align: center; }
.g > div { background: #fff; display: flex; flex-direction: column; align-items: center; justify-content: center; overflow: hidden; text-align: center; letter-spacing: .1px; }
.g .r2 { grid-row: span 2; } .g .c2 { grid-column: span 2; }
.g1, .g1b { margin-left: 114px; width: 589px; grid-template-columns: 49px 50px 78px 76px 75px 76px 47px 76px 52px; }
.g1 { grid-template-rows: 19px 48px; height: 69px; padding-bottom: 0; }
.g1b { grid-template-rows: 21px; height: 25px; padding: 2px 1px; }
.g1b div:last-child { border-right: 1px solid #000; }
.g1b .date { border-left: 1px solid #000; }
.g .wide { letter-spacing: .35px; }
.ln { display: flex; align-items: center; height: 16px; padding-left: 72px; letter-spacing: .05px; }
.ln i { border-bottom: 1px solid #000; }
.l1 { margin-top: 1px; }
.l1 span { width: 83px; } .l1 i { width: 533px; height: 14px; }
.l2 span { width: 57px; } .l2 i { width: 264px; height: 11px; }
.l2 .otk { width: 69px; margin-left: 4px; letter-spacing: 0; } .l2 .z { width: 222px; }
.g2 { margin: 14px 0 0 53px; width: 667px; height: 114px; grid-template-columns: 39px 43px 179px 79px 36px 42px 39px 39px 51px 59px 49px; grid-template-rows: 22px 47px 17px 23px; }
.g .lt { align-items: flex-start; padding-left: 1px; letter-spacing: .25px; }
.g .rt { align-items: flex-end; padding-right: 2px; }
.sign { display: flex; height: 30px; padding-left: 67px; }
.who { width: 44px; padding-top: 11px; }
.sign div { text-align: center; }
.sign em { display: block; height: 20px; border-bottom: 1px solid #000; font-size: 12px; line-height: 13px; padding: 5px 0 0 8px; letter-spacing: -.2px; }
.sign small { display: block; font-size: 9px; line-height: 9px; height: 9px; overflow: hidden; letter-spacing: .1px; }
.f1 { width: 233px; } .f1 small { padding-right: 16px; } .f2 { width: 149px; margin-left: 7px; } .f2 small { padding-left: 10px; } .f3 { width: 188px; margin-left: 15px; }
.recv { margin-top: -1px; }
.recv .who { width: 46px; padding-left: 2px; }
.recv .f3 { margin-left: 13px; }

.btabs { margin-top: 2px; width: 971px; height: 23px; border: 1px solid #000; background: linear-gradient(#f4f4f4, #c0c0c0); display: flex; }
.bt1 { width: 112px; padding: 3px 0 0 8px; }
.bt2 { width: 175px; height: 19px; background: #b4b4b4; border: 1px solid #000; border-top: 0; padding: 2px 0 0 3px; display: flex; justify-content: space-between; letter-spacing: -.2px; }
.bt2 i { width: 15px; height: 15px; background: linear-gradient(#e85858, #b02828); border-radius: 2px; }
.stat { display: flex; gap: 2px; margin: 5px 0 0 1px; }
.stat span { border: 1px solid #808080; height: 18px; padding: 1px 0 0 3px; }
.stat .a { width: 130px; } .stat .b { width: 52px; } .stat .c { flex: 1; margin-right: 4px; }

.tasks { height: 27px; display: flex; align-items: center; border-bottom: 1px solid #808080; letter-spacing: -.06px; padding-top: 1px; }
.tasks span { display: flex; align-items: center; gap: 3px; height: 22px; border-right: 1px solid #808080; }
.k1 { width: 96px; letter-spacing: -.2px; } .k2 { width: 156px; padding-left: 5px; } .k3 { width: 132px; padding-left: 4px; } .k4 { width: 157px; padding-left: 4px; letter-spacing: -.2px; }
.tasks .k5 { width: 181px; margin-left: 3px; padding-left: 2px; border: 1px solid #000; background: #ccc; }
.status { height: 17px; display: flex; gap: 2px; }
.status span { border: 1px solid #808080; border-bottom: 0; display: flex; align-items: center; justify-content: center; color: #808080; height: 17px; }
.status .q0 { width: 875px; justify-content: flex-start; border: 0; border-right: 1px solid #808080; }
.status .q1 { width: 102px; } .status .q2 { width: 32px; } .status .q3 { width: 28px; color: #000; } .status .q4 { width: 31px; } .status .q5 { width: 26px; }
.status .q6 { flex: 1; color: #000; gap: 5px; border-right: 0; justify-content: flex-start; letter-spacing: -.22px; }
```
